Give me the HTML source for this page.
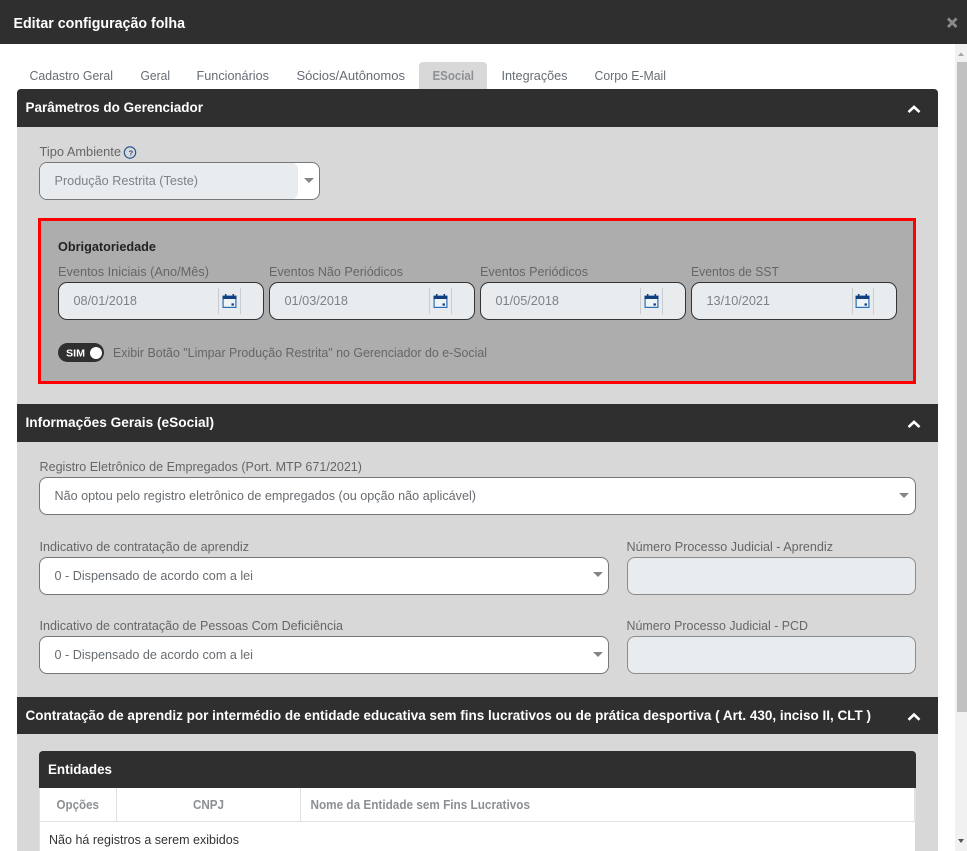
<!DOCTYPE html>
<html lang="pt-BR">
<head>
<meta charset="utf-8">
<title>Editar configuração folha</title>
<style>
html,body{margin:0;padding:0;background:#fff;width:967px;height:851px;overflow:hidden}
.b{position:absolute;box-sizing:border-box}
.dark{background:#2f2f2f}
.inp{background:#e9ecef;border:1px solid #333;border-radius:9px}
.sel{background:#fff;border:1px solid #777;border-radius:8px}
.pj{background:#e9ecef;border:1px solid #8c8c8c;border-radius:8px}
.arrow{position:absolute;width:0;height:0;border-left:5px solid transparent;border-right:5px solid transparent;border-top:5px solid #858585}
.div{position:absolute;width:1px;top:288px;height:26px;background:#c9cbce}
svg.o{position:absolute;left:0;top:0;width:967px;height:851px}
text{font-family:"Liberation Sans",sans-serif;white-space:pre}
</style>
</head>
<body>
<div class="b dark" style="left:0;top:0;width:967px;height:44px"></div>

<!-- scrollbar -->
<div class="b" style="left:955px;top:44px;width:12px;height:807px;background:#f1f1f1"></div>
<div class="b" style="left:957px;top:62px;width:10px;height:650px;background:#c1c1c1"></div>

<!-- tab -->
<div class="b" style="left:419px;top:62px;width:68px;height:27px;background:#d8d8d8;border-radius:4px 4px 0 0"></div>

<!-- panel -->
<div class="b" style="left:17px;top:127px;width:921px;height:724px;background:#d8d8d8"></div>
<div class="b dark" style="left:17px;top:89px;width:921px;height:38px;border-radius:4px 4px 0 0"></div>
<div class="b dark" style="left:17px;top:404px;width:921px;height:38px"></div>
<div class="b dark" style="left:17px;top:697px;width:921px;height:37px"></div>

<!-- tipo ambiente -->
<div class="b sel" style="left:39px;top:162px;width:281px;height:38px"></div>
<div class="b" style="left:40px;top:163px;width:258px;height:36px;background:#e9ecef;border-radius:7px 6px 6px 7px"></div>
<div class="arrow" style="left:304px;top:178px"></div>

<!-- obrigatoriedade -->
<div class="b" style="left:38px;top:218px;width:878px;height:166px;background:#adadad;border:3px solid #f00"></div>
<div class="b inp" style="left:58px;top:282px;width:206px;height:38px"></div>
<div class="b inp" style="left:269px;top:282px;width:206px;height:38px"></div>
<div class="b inp" style="left:480px;top:282px;width:206px;height:38px"></div>
<div class="b inp" style="left:691px;top:282px;width:206px;height:38px"></div>
<div class="div" style="left:218px"></div><div class="div" style="left:240px"></div>
<div class="div" style="left:429px"></div><div class="div" style="left:451px"></div>
<div class="div" style="left:640px"></div><div class="div" style="left:662px"></div>
<div class="div" style="left:852px"></div><div class="div" style="left:873px"></div>
<div class="b dark" style="left:58px;top:343px;width:46px;height:19px;border-radius:10px"></div>
<div class="b" style="left:90px;top:347px;width:12px;height:12px;border-radius:50%;background:#fff"></div>

<!-- selects -->
<div class="b sel" style="left:39px;top:477px;width:877px;height:38px"></div>
<div class="arrow" style="left:899px;top:493px"></div>
<div class="b sel" style="left:39px;top:557px;width:570px;height:38px"></div>
<div class="arrow" style="left:593px;top:572px"></div>
<div class="b pj" style="left:627px;top:557px;width:289px;height:38px"></div>
<div class="b sel" style="left:39px;top:636px;width:570px;height:38px"></div>
<div class="arrow" style="left:593px;top:652px"></div>
<div class="b pj" style="left:627px;top:636px;width:289px;height:38px"></div>

<!-- entidades -->
<div class="b dark" style="left:39px;top:751px;width:877px;height:37px;border-radius:4px 4px 0 0"></div>
<div class="b" style="left:39px;top:788px;width:876px;height:63px;background:#fff;border-left:1px solid #dee2e6"></div>
<div class="b" style="left:39px;top:821px;width:876px;height:1px;background:#dee2e6"></div>
<div class="b" style="left:116px;top:788px;width:1px;height:33px;background:#dee2e6"></div>
<div class="b" style="left:300px;top:788px;width:1px;height:33px;background:#dee2e6"></div>
<div class="b" style="left:914px;top:788px;width:2px;height:33px;background:#dee2e6"></div>

<svg class="o" viewBox="0 0 967 851" xmlns="http://www.w3.org/2000/svg">
<defs>
<g id="cal" fill="none">
<rect x="0.6" y="2.2" width="12.8" height="11.2" stroke="#2a6fb5" stroke-width="1.2" fill="#eef3f8"/>
<rect x="0" y="1.8" width="14" height="3.2" fill="#123f80"/>
<rect x="2.4" y="0" width="1.6" height="3" fill="#123f80"/>
<rect x="10" y="0" width="1.6" height="3" fill="#123f80"/>
<rect x="9" y="9.4" width="2.4" height="2.2" fill="#123f80"/>
</g>
<path id="chev" d="M-5.5 2.8 L0 -2.4 L5.5 2.8" fill="none" stroke="#fff" stroke-width="2.6"/>
</defs>

<text x="13.5" y="28" font-size="14.5" font-weight="700" fill="#fff" textLength="171.5" lengthAdjust="spacingAndGlyphs">Editar configuração folha</text>
<path d="M948 18.5 L956.5 27 M956.5 18.5 L948 27" stroke="#8a8a8a" stroke-width="2.8" fill="none"/>

<path d="M958 56 L961 52.5 L964 56 Z" fill="#a3a3a3"/>
<path d="M958 839 L961 843 L964 839 Z" fill="#555"/>

<g font-size="13" fill="#666d74">
<text x="29.5" y="80" textLength="83.5" lengthAdjust="spacingAndGlyphs">Cadastro Geral</text>
<text x="140.5" y="80" textLength="29.5" lengthAdjust="spacingAndGlyphs">Geral</text>
<text x="196.5" y="80" textLength="72.5" lengthAdjust="spacingAndGlyphs">Funcionários</text>
<text x="296.5" y="80" textLength="108.5" lengthAdjust="spacingAndGlyphs">Sócios/Autônomos</text>
<text x="432.5" y="80" textLength="41.5" lengthAdjust="spacingAndGlyphs" font-weight="700" fill="#8d9095">ESocial</text>
<text x="501.5" y="80" textLength="66" lengthAdjust="spacingAndGlyphs">Integrações</text>
<text x="594.5" y="80" textLength="71.5" lengthAdjust="spacingAndGlyphs">Corpo E-Mail</text>
</g>

<g font-size="13.5" font-weight="700" fill="#fff">
<text x="25.5" y="112" textLength="177.5" lengthAdjust="spacingAndGlyphs">Parâmetros do Gerenciador</text>
<text x="25.5" y="427" textLength="188.5" lengthAdjust="spacingAndGlyphs">Informações Gerais (eSocial)</text>
<text x="25.5" y="720" textLength="845.5" lengthAdjust="spacingAndGlyphs">Contratação de aprendiz por intermédio de entidade educativa sem fins lucrativos ou de prática desportiva ( Art. 430, inciso II, CLT )</text>
<text x="48" y="774" textLength="64" lengthAdjust="spacingAndGlyphs" font-size="14">Entidades</text>
</g>
<use href="#chev" x="914" y="109.3"/>
<use href="#chev" x="914" y="424.3"/>
<use href="#chev" x="914" y="717"/>

<g font-size="13" fill="#666">
<text x="39.5" y="156" textLength="81.5" lengthAdjust="spacingAndGlyphs">Tipo Ambiente</text>
<text x="58" y="276" textLength="151" lengthAdjust="spacingAndGlyphs">Eventos Iniciais (Ano/Mês)</text>
<text x="269" y="276" textLength="134" lengthAdjust="spacingAndGlyphs">Eventos Não Periódicos</text>
<text x="480" y="276" textLength="108" lengthAdjust="spacingAndGlyphs">Eventos Periódicos</text>
<text x="691" y="276" textLength="88" lengthAdjust="spacingAndGlyphs">Eventos de SST</text>
<text x="113" y="357" textLength="374" lengthAdjust="spacingAndGlyphs">Exibir Botão "Limpar Produção Restrita" no Gerenciador do e-Social</text>
<text x="39.5" y="471" textLength="322.5" lengthAdjust="spacingAndGlyphs">Registro Eletrônico de Empregados (Port. MTP 671/2021)</text>
<text x="39.5" y="551" textLength="209.5" lengthAdjust="spacingAndGlyphs">Indicativo de contratação de aprendiz</text>
<text x="626.5" y="551" textLength="206.5" lengthAdjust="spacingAndGlyphs">Número Processo Judicial - Aprendiz</text>
<text x="39.5" y="630" textLength="303.5" lengthAdjust="spacingAndGlyphs">Indicativo de contratação de Pessoas Com Deficiência</text>
<text x="626.5" y="630" textLength="181.5" lengthAdjust="spacingAndGlyphs">Número Processo Judicial - PCD</text>
</g>

<circle cx="130" cy="152.5" r="5.7" fill="none" stroke="#1c4f8c" stroke-width="1.1"/>
<text x="128.6" y="155.3" font-size="7.5" font-weight="700" fill="#1c4f8c">?</text>

<g font-size="13" fill="#7d8287">
<text x="54.5" y="185" textLength="143.5" lengthAdjust="spacingAndGlyphs">Produção Restrita (Teste)</text>
<text x="73.5" y="305" textLength="63.5" lengthAdjust="spacingAndGlyphs">08/01/2018</text>
<text x="284.5" y="305" textLength="63.5" lengthAdjust="spacingAndGlyphs">01/03/2018</text>
<text x="495.5" y="305" textLength="63.5" lengthAdjust="spacingAndGlyphs">01/05/2018</text>
<text x="706.5" y="305" textLength="63.5" lengthAdjust="spacingAndGlyphs">13/10/2021</text>
</g>
<g font-size="13" fill="#676c71">
<text x="54.5" y="500" textLength="421.5" lengthAdjust="spacingAndGlyphs">Não optou pelo registro eletrônico de empregados (ou opção não aplicável)</text>
<text x="54.5" y="580" textLength="198.5" lengthAdjust="spacingAndGlyphs">0 - Dispensado de acordo com a lei</text>
<text x="54.5" y="659" textLength="198.5" lengthAdjust="spacingAndGlyphs">0 - Dispensado de acordo com a lei</text>
</g>

<text x="58" y="251" font-size="13" font-weight="700" fill="#222" textLength="98" lengthAdjust="spacingAndGlyphs">Obrigatoriedade</text>
<text x="66" y="356.5" font-size="10.5" font-weight="700" fill="#fff" textLength="19" lengthAdjust="spacingAndGlyphs">SIM</text>

<use href="#cal" x="222.5" y="294"/>
<use href="#cal" x="433.5" y="294"/>
<use href="#cal" x="644.5" y="294"/>
<use href="#cal" x="855.5" y="294"/>

<g font-size="12.5" font-weight="700" fill="#8b8f94">
<text x="56.5" y="809" textLength="42.5" lengthAdjust="spacingAndGlyphs">Opções</text>
<text x="193" y="809" textLength="31" lengthAdjust="spacingAndGlyphs">CNPJ</text>
<text x="310.5" y="809" textLength="219.5" lengthAdjust="spacingAndGlyphs">Nome da Entidade sem Fins Lucrativos</text>
</g>
<text x="49" y="844" font-size="13" fill="#333" textLength="190" lengthAdjust="spacingAndGlyphs">Não há registros a serem exibidos</text>
</svg>
</body>
</html>
